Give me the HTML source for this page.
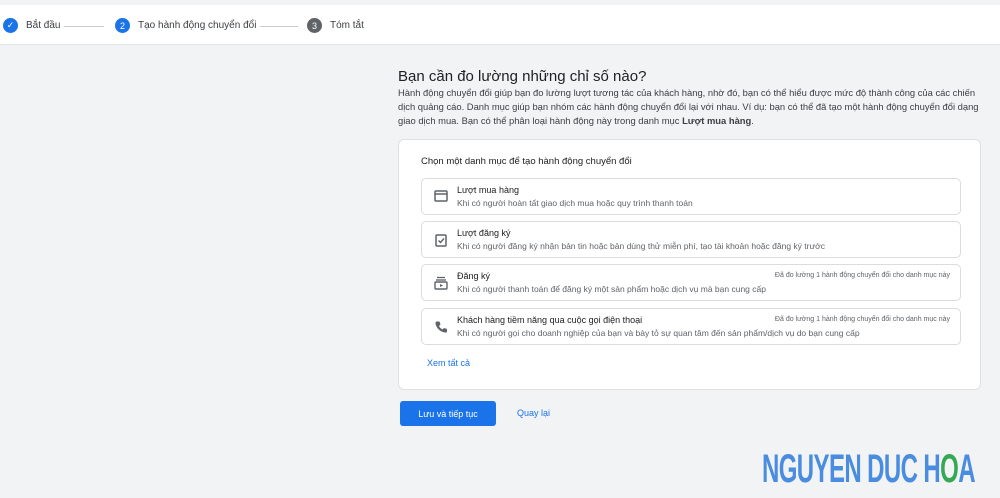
<!DOCTYPE html>
<html><head><meta charset="utf-8"><style>
*{margin:0;padding:0;box-sizing:border-box}
body{width:1000px;height:498px;background:#f1f3f4;font-family:"Liberation Sans",Arial,sans-serif;color:#3c4043;position:relative;overflow:hidden}
.top{position:absolute;left:0;top:5px;width:1000px;height:40px;background:#fff;border-bottom:1px solid #e4e4e4}
.step{position:absolute;top:13px;display:flex;align-items:center;font-size:10px;color:#3c4043}
.c{width:15px;height:15px;border-radius:50%;color:#fff;font-size:9px;display:flex;align-items:center;justify-content:center;margin-right:8px}
.line{position:absolute;top:21px;height:1px;background:#ccc}
h1{position:absolute;left:398px;top:68px;font-size:15px;font-weight:normal;color:#202124}
.intro{position:absolute;left:398px;top:86px;width:582px;font-size:9.4px;line-height:14px;color:#3c4043}
.card{position:absolute;left:398px;top:139px;width:583px;height:251px;background:#fff;border-radius:6px;border:1px solid #e0e0e0}
.ct{position:absolute;left:22px;top:16px;font-size:9.5px;color:#202124}
.item{position:absolute;left:22px;width:540px;height:37px;border:1px solid #dadce0;border-radius:5px}
.item svg{position:absolute;left:12px;top:11px}
.t{position:absolute;left:35px;top:6px;font-size:9px;color:#202124}
.d{position:absolute;left:35px;top:19px;font-size:8.5px;color:#5f6368}
.r{position:absolute;right:10px;top:7px;font-size:7px;color:#5f6368}
.btn{position:absolute;left:400px;top:401px;width:96px;height:25px;background:#1a73e8;color:#fff;font-size:9px;border-radius:3px;display:flex;align-items:center;justify-content:center}
.back{position:absolute;left:517px;top:408px;font-size:9px;color:#1a73e8}
.logo{position:absolute;left:762px;top:449px;font-size:40px;line-height:40px;white-space:nowrap;font-weight:bold;color:#4a8de0;letter-spacing:-1px;transform:scaleX(.6);transform-origin:left;font-family:"Liberation Sans Narrow","Liberation Sans",sans-serif}
</style></head><body>
<div class="top">
<div class="step" style="left:3px"><div class="c" style="background:#1a73e8">✓</div>Bắt đầu</div>
<div class="line" style="left:64px;width:40px"></div>
<div class="step" style="left:115px"><div class="c" style="background:#1a73e8">2</div>Tạo hành động chuyển đổi</div>
<div class="line" style="left:260px;width:38px"></div>
<div class="step" style="left:307px"><div class="c" style="background:#5f6368">3</div>Tóm tắt</div>
</div>
<h1>Bạn cần đo lường những chỉ số nào?</h1>
<div class="intro">Hành động chuyển đổi giúp bạn đo lường lượt tương tác của khách hàng, nhờ đó, bạn có thể hiểu được mức độ thành công của các chiến dịch quảng cáo. Danh mục giúp bạn nhóm các hành động chuyển đổi lại với nhau. Ví dụ: bạn có thể đã tạo một hành động chuyển đổi dạng giao dịch mua. Bạn có thể phân loại hành động này trong danh mục <b>Lượt mua hàng</b>.</div>
<div class="card">
<div class="ct">Chọn một danh mục để tạo hành động chuyển đổi</div>
<div class="item" style="top:38px"><svg width="14" height="12" viewBox="0 0 14 12"><rect x="1" y="1" width="12" height="10" rx="1" fill="none" stroke="#5f6368" stroke-width="1.5"/><line x1="1" y1="4" x2="13" y2="4" stroke="#5f6368" stroke-width="1.5"/></svg><div class="t">Lượt mua hàng</div><div class="d">Khi có người hoàn tất giao dịch mua hoặc quy trình thanh toán</div></div>
<div class="item" style="top:81px"><svg width="14" height="14" viewBox="0 0 14 14"><rect x="2" y="2" width="10" height="11" rx="1" fill="none" stroke="#5f6368" stroke-width="1.5"/><path d="M4.5 7.5l2 2 3.5-4" fill="none" stroke="#5f6368" stroke-width="1.4"/></svg><div class="t">Lượt đăng ký</div><div class="d">Khi có người đăng ký nhận bản tin hoặc bản dùng thử miễn phí, tạo tài khoản hoặc đăng ký trước</div></div>
<div class="item" style="top:124px"><svg width="14" height="14" viewBox="0 0 14 14"><line x1="3" y1="1.5" x2="11" y2="1.5" stroke="#5f6368" stroke-width="1.3"/><line x1="2" y1="4" x2="12" y2="4" stroke="#5f6368" stroke-width="1.3"/><rect x="1" y="6" width="12" height="7" rx="1" fill="none" stroke="#5f6368" stroke-width="1.4"/><path d="M6 8l3 1.5-3 1.5z" fill="#5f6368"/></svg><div class="t">Đăng ký</div><div class="d">Khi có người thanh toán để đăng ký một sản phẩm hoặc dịch vụ mà bạn cung cấp</div><div class="r">Đã đo lường 1 hành động chuyển đổi cho danh mục này</div></div>
<div class="item" style="top:168px"><svg width="14" height="14" viewBox="0 0 14 14"><path d="M3 1.5l2.5 0 1 3-1.5 1.5c.8 1.6 1.8 2.6 3.5 3.5l1.5-1.5 3 1v2.5c0 .6-.5 1-1 1C6.5 12.5 1.5 7.5 1.5 2.5c0-.5.5-1 1.5-1z" fill="#5f6368"/></svg><div class="t">Khách hàng tiềm năng qua cuộc gọi điện thoại</div><div class="d">Khi có người gọi cho doanh nghiệp của bạn và bày tỏ sự quan tâm đến sản phẩm/dịch vụ do bạn cung cấp</div><div class="r">Đã đo lường 1 hành động chuyển đổi cho danh mục này</div></div>
<div style="position:absolute;left:28px;top:218px;font-size:9px;color:#1a73e8">Xem tất cả</div>
</div>
<div class="btn">Lưu và tiếp tục</div>
<div class="back">Quay lại</div>
<div class="logo">NGUYEN DUC H<span style="color:#34a853">O</span>A</div>
</body></html>
